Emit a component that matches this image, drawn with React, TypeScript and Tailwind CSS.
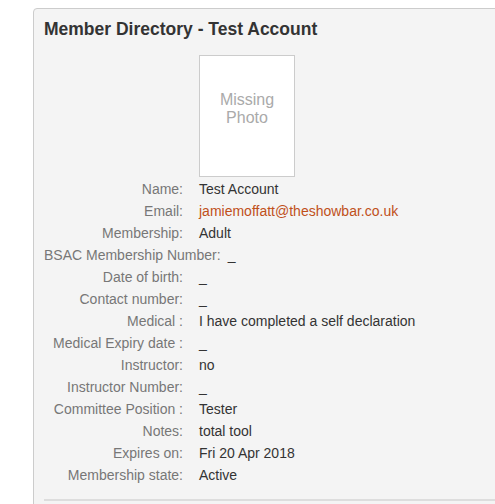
const ROWS: { label: string; value: string; email?: boolean; tight?: boolean }[] = [
  { label: "Name:", value: "Test Account" },
  { label: "Email:", value: "jamiemoffatt@theshowbar.co.uk", email: true },
  { label: "Membership:", value: "Adult" },
  { label: "BSAC Membership Number:", value: "_", tight: true },
  { label: "Date of birth:", value: "_" },
  { label: "Contact number:", value: "_" },
  { label: "Medical :", value: "I have completed a self declaration" },
  { label: "Medical Expiry date :", value: "_" },
  { label: "Instructor:", value: "no" },
  { label: "Instructor Number:", value: "_" },
  { label: "Committee Position :", value: "Tester" },
  { label: "Notes:", value: "total tool" },
  { label: "Expires on:", value: "Fri 20 Apr 2018" },
  { label: "Membership state:", value: "Active" },
];

function DetailRow({ label, value, email, tight }: (typeof ROWS)[number]) {
  return (
    <div className="flex h-[22px] items-center whitespace-nowrap">
      <span className="min-w-[139px] text-right text-[#777]">{label}</span>
      <span
        className={
          (tight ? "ml-[7px] " : "ml-[16px] ") +
          (email ? "text-[#c0501a]" : "text-[#333]")
        }
      >
        {value}
      </span>
    </div>
  );
}

export default function App() {
  return (
    <div className="h-[504px] w-[495px] overflow-hidden bg-white pt-[8px] pl-[33px] font-['Liberation_Sans',Arial,sans-serif]">
      <div className="h-[520px] w-[480px] rounded-tl-[4px] border border-[#cccccc] bg-[#f4f4f4] pt-[10px] pl-[10px]">
        <h1 className="text-[17.5px] leading-[20px] font-bold text-[#333]">
          Member Directory - Test Account
        </h1>
        <div className="mt-[16px] ml-[155px] flex h-[122px] w-[96px] flex-col items-center border border-[#cccccc] bg-white pt-[35px] text-center text-[16px] leading-[18px] text-[#aaa]">
          <span>Missing</span>
          <span>Photo</span>
        </div>
        <div className="mt-[1px] text-[14px]">
          {ROWS.map((row) => (
            <DetailRow key={row.label} {...row} />
          ))}
        </div>
        <div className="mt-[13px] border-t-2 border-[#dddddd]" />
      </div>
    </div>
  );
}
